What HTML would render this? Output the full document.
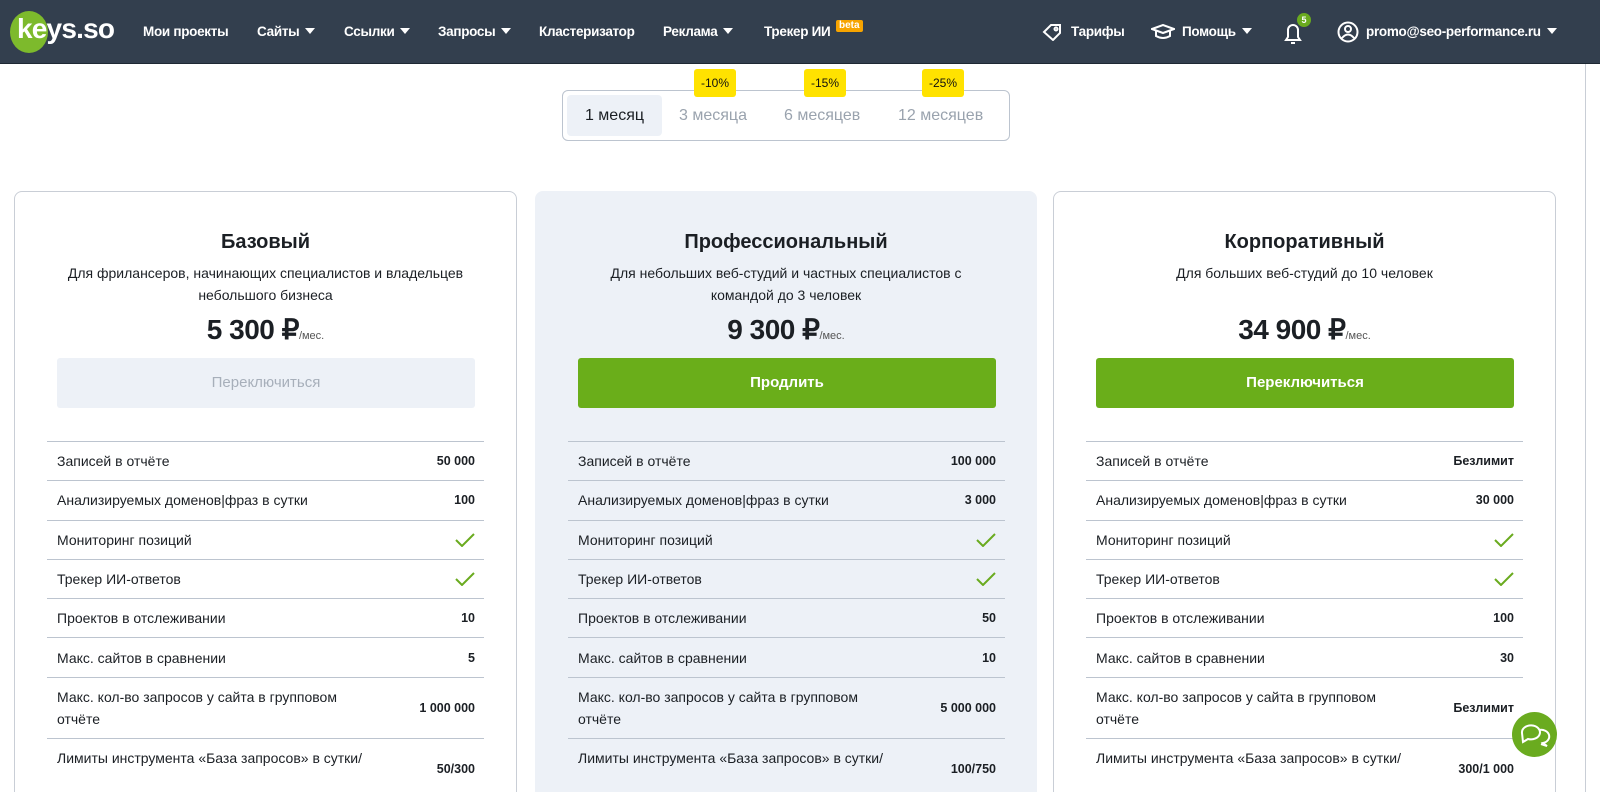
<!DOCTYPE html>
<html><head><meta charset="utf-8"><style>
*{box-sizing:border-box;margin:0;padding:0}
html,body{width:1600px;height:792px;overflow:hidden}
body{background:#fff;font-family:"Liberation Sans",Arial,sans-serif;color:#1b1f24;position:relative}
.nav{position:absolute;left:0;top:0;width:1600px;height:64px;background:#333f4e;border-bottom:1px solid #1e2833}
.nav .it{position:absolute;top:24px;color:#fff;font-size:13.5px;font-weight:bold;letter-spacing:-0.3px;white-space:nowrap}
.tri{display:inline-block;width:0;height:0;border-left:5px solid transparent;border-right:5px solid transparent;border-top:6px solid #fff;margin-left:6px;vertical-align:2px}
.logo{position:absolute;left:10px;top:11px;width:38px;height:42px;border-radius:50%;background:#7dba2c}
.logot{position:absolute;left:17px;top:13px;color:#fff;font-size:28px;font-weight:bold;letter-spacing:-0.8px}
.beta{position:absolute;left:836px;top:20px;background:#f7a400;color:#fff;font-size:10px;font-weight:bold;padding:0 3px;border-radius:2px;line-height:12px}
.badge{position:absolute;left:1297px;top:13px;width:14px;height:14px;border-radius:50%;background:#6aab1f;color:#fff;font-size:9px;font-weight:bold;text-align:center;line-height:14px}
.tabs{position:absolute;left:562px;top:90px;width:448px;height:51px;border:1px solid #bcc4cf;border-radius:6px}
.tab{position:absolute;top:4px;height:41px;line-height:41px;font-size:16px;color:#9aa3ae}
.disc{position:absolute;top:69px;height:28px;line-height:28px;background:#ffe200;font-size:12px;border-radius:3px;padding:0 7px;color:#111}
.card{position:absolute;top:191px;width:503px;height:620px;border:1px solid #c9ced6;border-radius:8px;background:#fff}
.card.p{background:#edf1f7;border-color:#edf1f7}
.card h2{position:absolute;top:39px;width:100%;text-align:center;font-size:20px;font-weight:bold}
.card .d{position:absolute;top:70px;left:30px;right:30px;text-align:center;font-size:14px;line-height:22px}
.card .pr{position:absolute;top:121px;width:100%;text-align:center;font-size:28px;font-weight:bold;letter-spacing:-0.5px}
.pr small{font-size:11px;font-weight:normal;color:#555;letter-spacing:0}
.btn{position:absolute;top:166px;left:42px;width:418px;height:50px;line-height:50px;text-align:center;border-radius:3px;font-size:15px;font-weight:bold;color:#fff;background:#6aae1a}
.btn.g{background:#edf1f7;color:#a7afba;font-weight:normal}
.rows{position:absolute;top:249px;left:32px;width:437px}
.r{border-top:1px solid #bcc4cf;display:flex;align-items:center;justify-content:space-between;padding:0 9px 0 10px;font-size:14px;height:39.3px}
.r b{font-size:12.5px}
.r.t{height:61px;line-height:22px}
.ck{width:20px;height:14px}
.chat{position:absolute;left:1512px;top:712px;width:45px;height:45px;border-radius:50%;background:#6aab1f}
.sb{position:absolute;left:1585px;top:64px;width:1px;height:728px;background:#c9ced6}
</style></head><body>
<div class="nav">
<div class="logo"></div><div class="logot">keys.so</div>
<div class="it" style="left:143px">Мои проекты</div>
<div class="it" style="left:257px">Сайты<span class="tri"></span></div>
<div class="it" style="left:344px">Ссылки<span class="tri"></span></div>
<div class="it" style="left:438px">Запросы<span class="tri"></span></div>
<div class="it" style="left:539px">Кластеризатор</div>
<div class="it" style="left:663px">Реклама<span class="tri"></span></div>
<div class="it" style="left:764px">Трекер ИИ</div>
<div class="beta">beta</div>
<svg style="position:absolute;left:1042px;top:23px" width="22" height="18" viewBox="0 0 22 18" fill="none" stroke="#fff" stroke-width="2"><path d="M2 9 L9 2 H18 V10 L11 17 Z"/><circle cx="14" cy="6" r="1.5"/></svg>
<div class="it" style="left:1071px">Тарифы</div>
<svg style="position:absolute;left:1151px;top:24px" width="24" height="16" viewBox="0 0 24 16" fill="none" stroke="#fff" stroke-width="2"><path d="M1 5 L12 1 L23 5 L12 9 Z"/><path d="M5 7 V12 Q12 16 19 12 V7"/></svg>
<div class="it" style="left:1182px">Помощь<span class="tri"></span></div>
<svg style="position:absolute;left:1283px;top:20px" width="20" height="26" viewBox="0 0 20 26" fill="none" stroke="#fff" stroke-width="2"><path d="M3 20 H17 L15 17 V10 A5 5 0 0 0 5 10 V17 Z"/><path d="M8 23 H12"/></svg>
<div class="badge">5</div>
<svg style="position:absolute;left:1337px;top:21px" width="22" height="22" viewBox="0 0 22 22" fill="none" stroke="#fff" stroke-width="2"><circle cx="11" cy="11" r="9.5"/><circle cx="11" cy="8" r="3"/><path d="M5 17 Q11 10 17 17"/></svg>
<div class="it" style="left:1366px">promo@seo-performance.ru<span class="tri"></span></div>
</div>
<div class="tabs">
<div class="tab" style="left:4px;width:95px;background:#edf1f7;border-radius:4px;color:#1b1f24;text-align:center">1 месяц</div>
<div class="tab" style="left:116px">3 месяца</div>
<div class="tab" style="left:221px">6 месяцев</div>
<div class="tab" style="left:335px">12 месяцев</div>
</div>
<div class="disc" style="left:694px">-10%</div>
<div class="disc" style="left:804px">-15%</div>
<div class="disc" style="left:922px">-25%</div>

<div class="card" style="left:14px">
<h2>Базовый</h2><div class="d">Для фрилансеров, начинающих специалистов и владельцев<br>небольшого бизнеса</div>
<div class="pr">5 300 ₽<small>/мес.</small></div>
<div class="btn g">Переключиться</div>
<div class="rows">
<div class="r"><span>Записей в отчёте</span><b>50 000</b></div>
<div class="r"><span>Анализируемых доменов|фраз в сутки</span><b>100</b></div>
<div class="r"><span>Мониторинг позиций</span><svg class="ck" viewBox="0 0 20 14"><path d="M1 7 L7 13 L19 1" fill="none" stroke="#6aab1f" stroke-width="2"/></svg></div>
<div class="r"><span>Трекер ИИ-ответов</span><svg class="ck" viewBox="0 0 20 14"><path d="M1 7 L7 13 L19 1" fill="none" stroke="#6aab1f" stroke-width="2"/></svg></div>
<div class="r"><span>Проектов в отслеживании</span><b>10</b></div>
<div class="r"><span>Макс. сайтов в сравнении</span><b>5</b></div>
<div class="r t"><span>Макс. кол-во запросов у сайта в групповом<br>отчёте</span><b>1 000 000</b></div>
<div class="r t"><span>Лимиты инструмента «База запросов» в сутки/<br>&nbsp;</span><b>50/300</b></div>
</div></div>

<div class="card p" style="left:535px;width:502px">
<h2>Профессиональный</h2><div class="d">Для небольших веб-студий и частных специалистов с<br>командой до 3 человек</div>
<div class="pr">9 300 ₽<small>/мес.</small></div>
<div class="btn">Продлить</div>
<div class="rows">
<div class="r"><span>Записей в отчёте</span><b>100 000</b></div>
<div class="r"><span>Анализируемых доменов|фраз в сутки</span><b>3 000</b></div>
<div class="r"><span>Мониторинг позиций</span><svg class="ck" viewBox="0 0 20 14"><path d="M1 7 L7 13 L19 1" fill="none" stroke="#6aab1f" stroke-width="2"/></svg></div>
<div class="r"><span>Трекер ИИ-ответов</span><svg class="ck" viewBox="0 0 20 14"><path d="M1 7 L7 13 L19 1" fill="none" stroke="#6aab1f" stroke-width="2"/></svg></div>
<div class="r"><span>Проектов в отслеживании</span><b>50</b></div>
<div class="r"><span>Макс. сайтов в сравнении</span><b>10</b></div>
<div class="r t"><span>Макс. кол-во запросов у сайта в групповом<br>отчёте</span><b>5 000 000</b></div>
<div class="r t"><span>Лимиты инструмента «База запросов» в сутки/<br>&nbsp;</span><b>100/750</b></div>
</div></div>

<div class="card" style="left:1053px">
<h2>Корпоративный</h2><div class="d">Для больших веб-студий до 10 человек</div>
<div class="pr">34 900 ₽<small>/мес.</small></div>
<div class="btn">Переключиться</div>
<div class="rows">
<div class="r"><span>Записей в отчёте</span><b>Безлимит</b></div>
<div class="r"><span>Анализируемых доменов|фраз в сутки</span><b>30 000</b></div>
<div class="r"><span>Мониторинг позиций</span><svg class="ck" viewBox="0 0 20 14"><path d="M1 7 L7 13 L19 1" fill="none" stroke="#6aab1f" stroke-width="2"/></svg></div>
<div class="r"><span>Трекер ИИ-ответов</span><svg class="ck" viewBox="0 0 20 14"><path d="M1 7 L7 13 L19 1" fill="none" stroke="#6aab1f" stroke-width="2"/></svg></div>
<div class="r"><span>Проектов в отслеживании</span><b>100</b></div>
<div class="r"><span>Макс. сайтов в сравнении</span><b>30</b></div>
<div class="r t"><span>Макс. кол-во запросов у сайта в групповом<br>отчёте</span><b>Безлимит</b></div>
<div class="r t"><span>Лимиты инструмента «База запросов» в сутки/<br>&nbsp;</span><b>300/1 000</b></div>
</div></div>
<div class="sb"></div>
<div class="chat"><svg width="45" height="45" viewBox="0 0 45 45" fill="none" stroke="#fff" stroke-width="2"><path d="M10 21 A9 7 0 1 1 16 27 L11 30 Z"/><path d="M27 18 A8 6.5 0 1 1 31 31 L35 34 L29 32"/></svg></div>
</body></html>
